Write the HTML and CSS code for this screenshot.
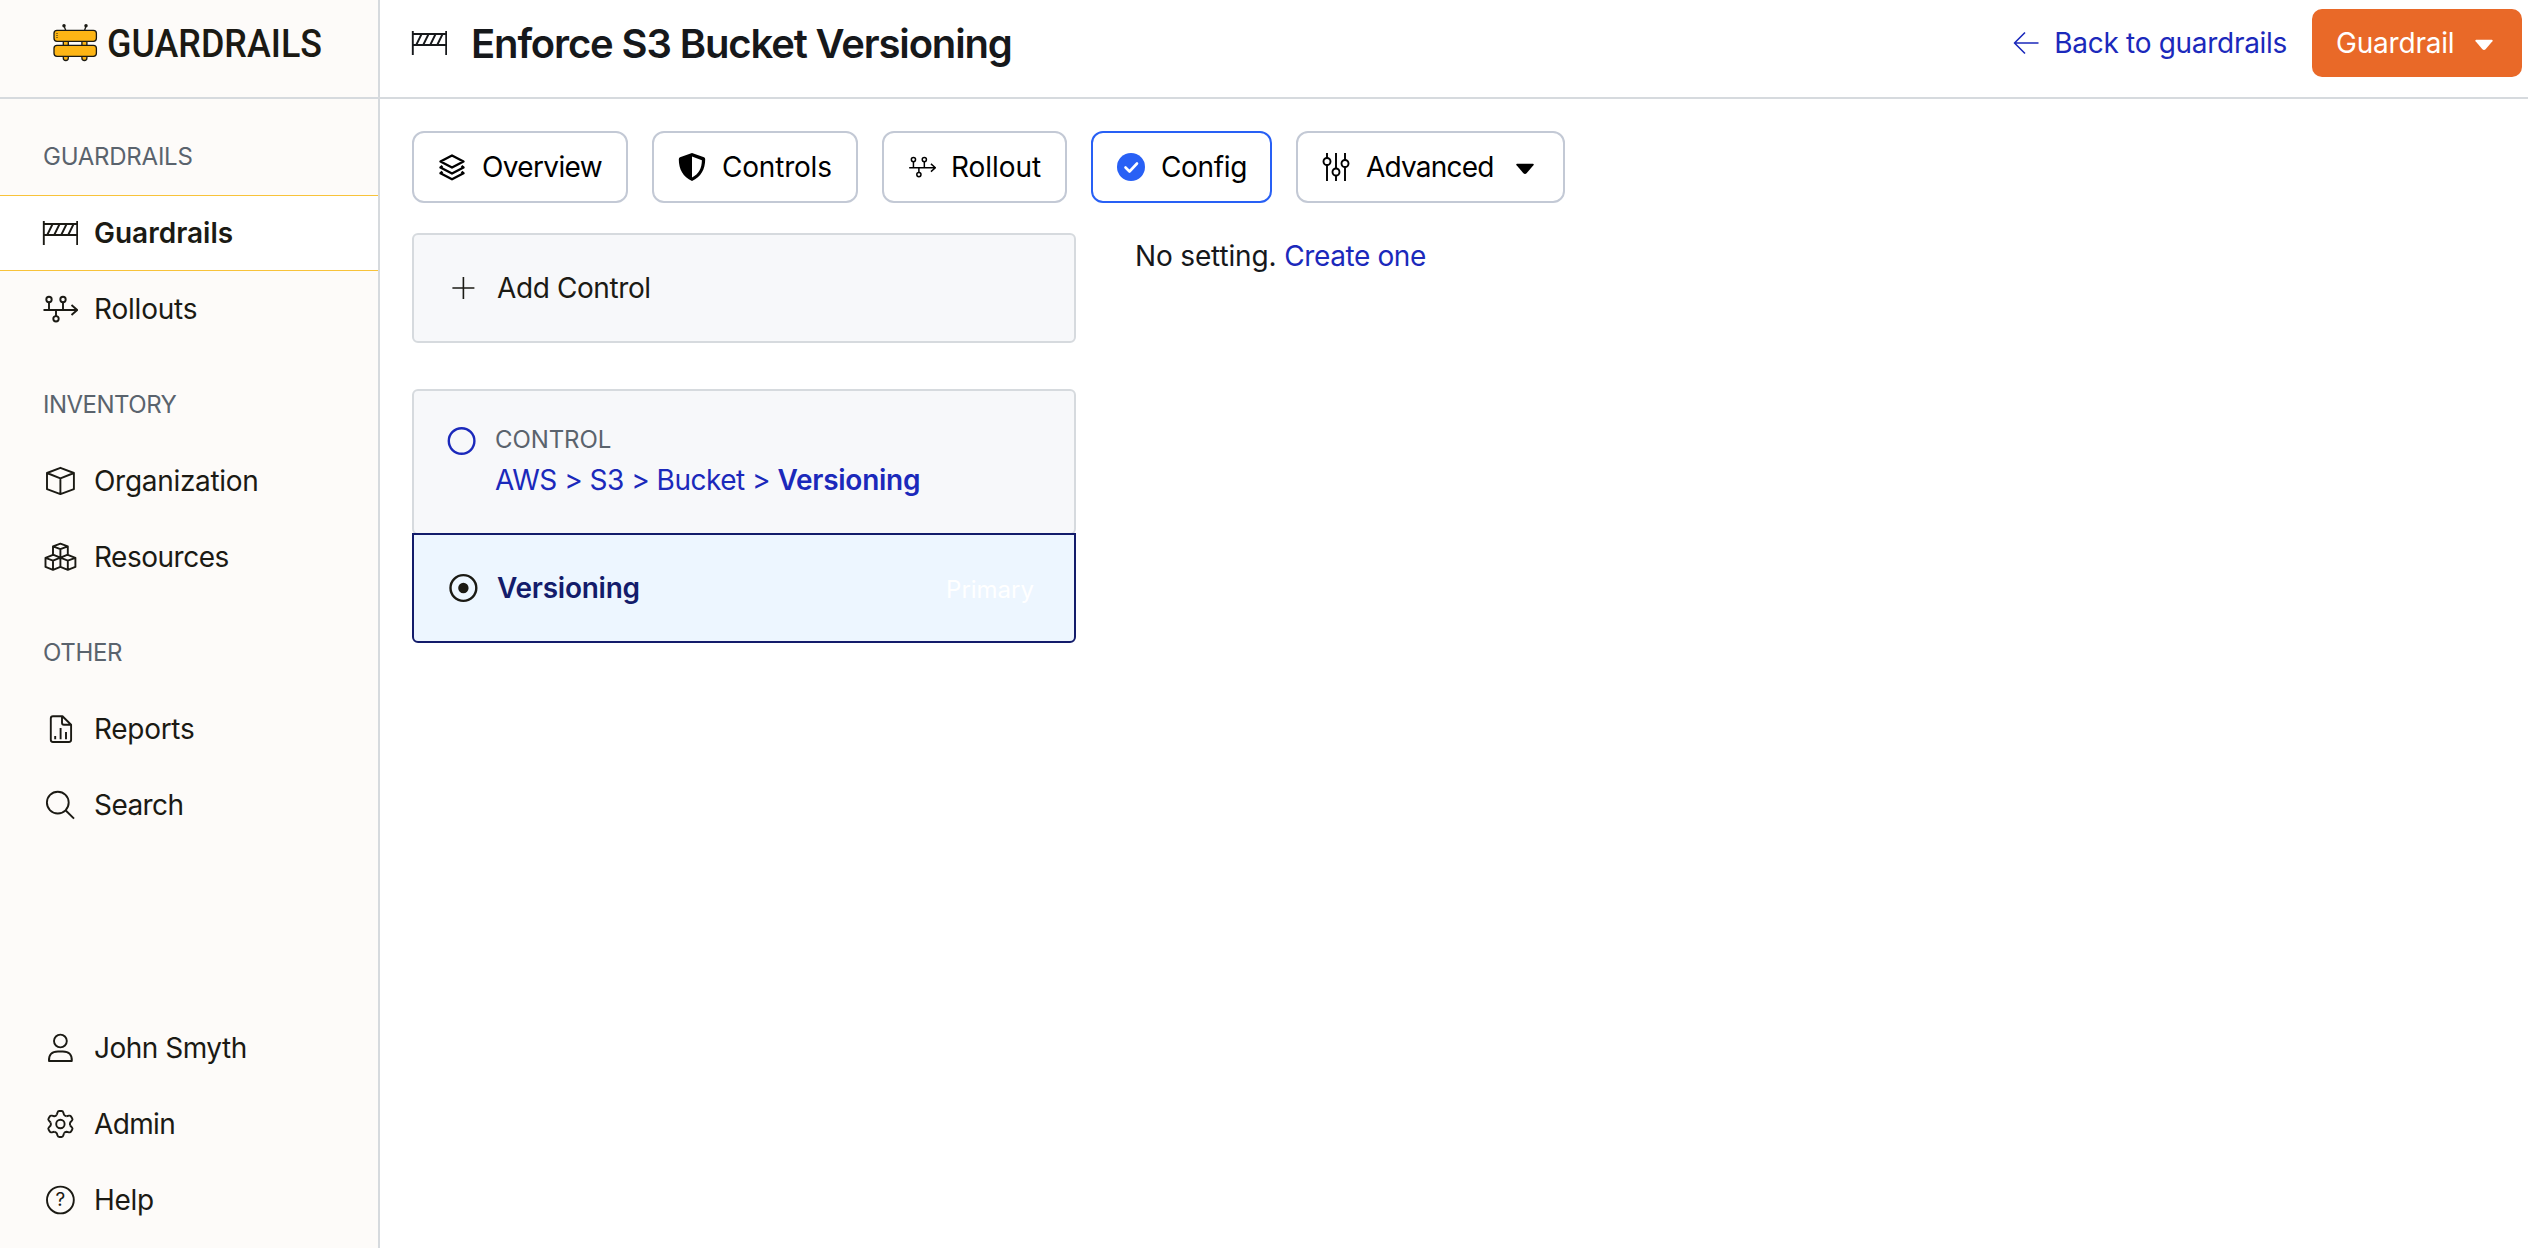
FILE: index.html
```html
<!DOCTYPE html>
<html lang="en">
<head>
<meta charset="utf-8">
<title>Enforce S3 Bucket Versioning</title>
<link rel="stylesheet" href="styles.css">
</head>
<body>
<svg class="defs" width="0" height="0">
  <symbol id="i-guardrail" viewBox="0 0 36 36"><path d="M1.8 6v24M35.2 6v24M1.8 9h33.4M1.8 20h33.4M5.2 20l5.4-11M12.2 20l5.4-11M19.2 20l5.4-11M26.2 20l5.4-11"/></symbol>
  <symbol id="i-rollout" viewBox="0 0 36 36"><path d="M1.5 19H35M29.5 14l5.7 5-5.7 5M7 11.5V19M21 11.5V19M14 19v6.2"/><circle cx="7" cy="8.5" r="2.7"/><circle cx="21" cy="8.5" r="2.7"/><circle cx="14" cy="27.8" r="2.7"/></symbol>
  <symbol id="i-caret" viewBox="0 0 20 12"><path d="M2.2.8h15.6q1.6 0 .6 1.5l-6.6 7.8q-1.8 1.8-3.6 0L1.6 2.3Q.6.8 2.2.8z"/></symbol>
</svg>
<div class="app">
  <aside class="sidebar">
    <div class="brand">
      <svg class="brand-logo" width="290" height="70" viewBox="50 10 290 70">
        <g class="logo-mark">
          <path d="M64 26l2 5M86 26l-1.6 5"/>
          <circle class="logo-dot" cx="64" cy="25.8" r="1.1"/><circle class="logo-dot" cx="86" cy="25.8" r="1.1"/>
          <path d="M63.3 38h5v20q0 2.500-2.500 2.500t-2.500-2.500zM81.900 38h5v20q0 2.500-2.500 2.500t-2.500-2.500z"/>
          <rect x="54" y="30.300" width="42.400" height="11" rx="3"/>
          <rect x="54" y="45.300" width="42.400" height="11" rx="3"/>
          <path class="logo-dots" d="M57 33v6"/>
        </g>
        <text class="logo-text" x="107" y="57.300" textLength="215" lengthAdjust="spacingAndGlyphs">GUARDRAILS</text>
      </svg>
    </div>
    <nav class="nav">
      <h2 class="nav-label tr-25">GUARDRAILS</h2>
      <a class="nav-item active"><svg class="icon"><use href="#i-guardrail"/></svg><span>Guardrails</span></a>
      <a class="nav-item"><svg class="icon"><use href="#i-rollout"/></svg><span class="tr-20">Rollouts</span></a>
      <h2 class="nav-label tr-50">INVENTORY</h2>
      <a class="nav-item"><svg class="icon" viewBox="0 0 36 36"><path d="M18.400 4.800L31.900 10v16.200l-13.500 4.900L5 26.200V10zM5 10l13.400 5.400L31.900 10M18.400 15.400v15.700"/></svg><span class="tr-30">Organization</span></a>
      <a class="nav-item"><svg class="icon" viewBox="0 0 36 36"><path d="M18.400 4.700l7.400 2.600v8.400l-7.400 3-7.400-3V7.300zM11 7.300l7.400 2.900 7.400-2.900M18.400 10.200v8.500M11 15.800l-7.500 3v9.100l7.500 2.900 7.400-2.900 7.400 2.900 7.600-2.900v-9.100l-7.600-3M3.500 18.800L11 21.700l7.400-3 7.400 3 7.600-2.900M11 21.700v9.100M25.800 21.700v9.100M18.400 18.700v9.200"/></svg><span class="tr-50">Resources</span></a>
      <h2 class="nav-label tr-35">OTHER</h2>
      <a class="nav-item"><svg class="icon" viewBox="0 0 36 36"><path d="M11 5.200h9.500l8.600 8.500v15.100q0 2.200-2.200 2.200H11q-2.200 0-2.200-2.200V7.400Q8.800 5.200 11 5.200zM20 5.200v6.600q0 1.900 1.900 1.900h7.200M13.200 25v3.200M18.600 17v11.200M24 21v7.200"/></svg><span class="tr-30">Reports</span></a>
      <a class="nav-item"><svg class="icon" viewBox="0 0 36 36"><circle cx="15.800" cy="15.600" r="10.900"/><path d="M23.500 23.300l8.500 8.300"/></svg><span class="tr-55">Search</span></a>
      <div class="nav-bottom">
        <a class="nav-item"><svg class="icon" viewBox="0 0 36 36"><circle cx="18.400" cy="11" r="6.400"/><path d="M7 31q-.5-9.500 9-9.500h4.800q9.500 0 9 9.500z"/></svg><span class="tr-50">John Smyth</span></a>
        <a class="nav-item"><svg class="icon" viewBox="0 0 36 36">
          <defs><path id="tooth" d="M-3.600-9.200L-2.900-11.600Q-2.500-13-1.200-13H1.200Q2.500-13 2.900-11.600L3.600-9.200Q4.500-8 6.170-7.720"/></defs>
          <g transform="translate(18.400 18)"><use href="#tooth"/><use href="#tooth" transform="rotate(60)"/><use href="#tooth" transform="rotate(120)"/><use href="#tooth" transform="rotate(180)"/><use href="#tooth" transform="rotate(240)"/><use href="#tooth" transform="rotate(300)"/><circle r="4.200"/></g></svg><span class="tr-65">Admin</span></a>
        <a class="nav-item"><svg class="icon" viewBox="0 0 36 36"><circle cx="18.400" cy="18" r="13.400"/><text class="help-mark" x="18.400" y="24.300">?</text></svg><span class="tr-30">Help</span></a>
      </div>
    </nav>
  </aside>
  <main class="main">
    <header class="topbar">
      <svg class="icon"><use href="#i-guardrail"/></svg>
      <h1 class="title">Enforce S3 Bucket Versioning</h1>
      <a class="back"><svg class="icon-arrow" width="26" height="24" viewBox="0 0 26 24"><path d="M1.500 12H25.500M12 1.500L1.500 12 12 22.500"/></svg><span class="tr-30">Back to guardrails</span></a>
      <button class="primary"><span class="tr-20">Guardrail</span><svg class="caret" width="20" height="12"><use href="#i-caret"/></svg></button>
    </header>
    <div class="tabs">
      <button class="tab tab-overview"><svg class="tab-icon layers" viewBox="0 0 28 28"><path d="M14 2.500l11.500 6L14 14.500 2.500 8.500zM4.500 13L2.500 14.500l11.500 6 11.500-6L23.500 13M4.500 18.800L2.500 20.300l11.500 6 11.500-6-2-1.500"/></svg><span class="tr-65">Overview</span></button>
      <button class="tab tab-controls"><svg class="tab-icon" viewBox="0 0 28 28"><path class="solid" d="M14 0l12 4.200q1.200.5 1.200 2C27.200 16 23 24 14 28 5 24 .800 16 .800 6.200q0-1.500 1.200-2zM14 3.600V24.400c7-3.400 9.800-9.500 9.900-17.200z" fill-rule="evenodd"/></svg><span class="tr-20">Controls</span></button>
      <button class="tab tab-rollout"><svg class="tab-icon"><use href="#i-rollout"/></svg><span class="tr-05">Rollout</span></button>
      <button class="tab tab-config"><svg class="tab-icon" viewBox="0 0 28 28"><circle class="dot-blue" cx="14" cy="14" r="14"/><path class="check" d="M8.500 14.500l4 4 7.500-8"/></svg><span class="tr-35">Config</span></button>
      <button class="tab tab-advanced"><svg class="tab-icon" viewBox="0 0 28 28"><path d="M5 0v5M5 12v16M14 0v15.500M14 22.500V28M23 0v7M23 14v14"/><circle cx="5" cy="8.500" r="3.500"/><circle cx="14" cy="19" r="3.500"/><circle cx="23" cy="10.500" r="3.500"/></svg><span class="tr-80">Advanced</span><svg class="caret" width="20" height="12"><use href="#i-caret"/></svg></button>
    </div>
    <div class="content">
      <section class="controls">
        <div class="card add"><svg class="mark" viewBox="0 0 32 32"><path d="M16.400 5v22M5.400 16h22"/></svg><span class="tr-40">Add Control</span></div>
        <div class="group">
          <div class="card control">
            <svg class="mark link" viewBox="0 0 32 32"><circle cx="15.600" cy="17" r="12.800"/></svg>
            <div class="control-text">
              <div class="eyebrow">CONTROL</div>
              <div class="crumb">AWS &gt; S3 &gt; Bucket &gt; <b>Versioning</b></div>
            </div>
          </div>
          <div class="card selected"><svg class="mark radio" viewBox="0 0 32 32"><circle cx="16.400" cy="16" r="12.900"/><circle class="radio-dot" cx="16.400" cy="16" r="5.200"/></svg><span class="selected-name">Versioning</span><span class="badge">Primary</span></div>
        </div>
      </section>
      <p class="empty"><span class="tr-15">No setting.</span> <a class="create tr-40">Create one</a></p>
    </div>
  </main>
</div>
</body>
</html>
```
FILE: styles.css
```css
* { box-sizing: border-box; }
body { margin: 0; font: 28px/36px Inter, "Liberation Sans", sans-serif; color: #16181b; background: #fff; }
h1, h2, p { margin: 0; font-weight: 400; }
svg { fill: none; stroke: currentColor; stroke-width: 1.9; stroke-linejoin: round; flex: none; display: block; }
.defs { position: absolute; }
.app { display: flex; height: 1248px; }

/* optical tracking */
.tr-05 { letter-spacing: -.05px; }
.tr-15 { letter-spacing: -.15px; }
.tr-20 { letter-spacing: -.2px; }
.tr-25 { letter-spacing: -.25px; }
.tr-30 { letter-spacing: -.3px; }
.tr-35 { letter-spacing: -.35px; }
.tr-40 { letter-spacing: -.4px; }
.tr-50 { letter-spacing: -.5px; }
.tr-55 { letter-spacing: -.57px; }
.tr-65 { letter-spacing: -.65px; }
.tr-80 { letter-spacing: -.8px; }

.sidebar { width: 380px; flex: none; background: #fdfbf9; border-right: 2px solid #d6dade; color: #1b1a14; display: flex; flex-direction: column; }
.brand { height: 99px; border-bottom: 2px solid #d6dade; padding: 10px 0 0 50px; flex: none; }
.logo-mark { fill: #fdb515; stroke: #1b1a14; stroke-width: 1.3; }
.logo-dot { fill: #1b1a14; }
.logo-dots { stroke-width: 1; stroke-dasharray: 1 1; }
.logo-text { font: 500 38.5px Roboto, sans-serif; fill: #1b1a14; stroke: none; }
.nav { flex: 1; display: flex; flex-direction: column; padding-bottom: 10px; }
.nav-label { height: 96px; padding: 39.5px 0 0 43px; font-size: 24px; color: #5a636d; flex: none; }
.nav-item { height: 76px; display: flex; align-items: center; gap: 16px; padding-left: 42px; flex: none; }
.nav-item.active { background: #fff; border: solid #f8c33a; border-width: 1px 0; font-weight: 600; }
.nav-bottom { margin-top: auto; }
.icon { width: 36px; height: 36px; }
.help-mark { font: 19px Inter, sans-serif; fill: currentColor; stroke: none; text-anchor: middle; }

.main { flex: 1; min-width: 0; }
.topbar { height: 99px; border-bottom: 2px solid #d6dade; padding: 0 6px 11px 31px; display: flex; align-items: center; }
.title { margin: 2px 0 0 24px; font-size: 40px; line-height: 48px; font-weight: 600; letter-spacing: -1.14px; white-space: nowrap; }
.back { margin-left: auto; display: flex; align-items: center; gap: 15px; color: #1b29bb; }
.icon-arrow { stroke-width: 1.6; }
.primary { width: 210px; height: 68px; margin-left: 25px; padding: 0 28px 0 24px; border: 0; border-radius: 10px; background: #e96928; color: #fff; font: inherit; display: flex; align-items: center; justify-content: space-between; }
.caret { fill: currentColor; stroke: none; position: relative; top: 2px; }

.tabs { display: flex; gap: 24px; padding: 32px 0 0 32px; }
.tab { height: 72px; padding: 0 0 0 24px; border: 2px solid #c3c9d5; border-radius: 12px; background: #fff; color: #000; font: inherit; display: flex; align-items: center; gap: 16px; }
.tab-overview { width: 216px; }
.tab-controls { width: 206px; }
.tab-rollout { width: 185px; gap: 15px; }
.tab-config { width: 181px; border-color: #2860f5; }
.tab-advanced { width: 269px; padding-right: 28px; }
.tab-advanced .caret { margin-left: auto; }
.tab-icon { width: 28px; height: 28px; }
.layers { stroke-width: 2.4; }
.solid { fill: #000; stroke: none; }
.dot-blue { fill: #2860f5; stroke: none; }
.check { stroke: #fff; stroke-width: 2.6; stroke-linecap: round; }

.content { display: flex; gap: 59px; padding: 30px 0 0 32px; }
.controls { width: 664px; display: flex; flex-direction: column; gap: 46px; }
.card { height: 110px; border: 2px solid #d6dade; border-radius: 6px; background: #f7f8fa; display: flex; align-items: center; padding-left: 33px; }
.mark { width: 32px; height: 32px; margin-right: 18px; }
.add { color: #1b1a14; }
.add .mark { stroke-width: 1.6; }
.control { height: 146px; align-items: flex-start; padding: 31px 0 0 32px; }
.control .mark { stroke-width: 2.4; margin: 2px 17px 0 0; }
.link, .crumb { color: #1b29bb; }
.eyebrow { font-size: 24px; letter-spacing: -.09px; color: #5a636d; margin-bottom: 4px; }
.crumb { letter-spacing: -.5px; white-space: nowrap; }
.crumb b { font-weight: 600; letter-spacing: -.25px; }
.selected { margin-top: -2px; border-color: #131c6b; border-radius: 0 0 6px 6px; background: #edf6ff; position: relative; }
.radio { color: #1b1a14; stroke-width: 2.4; }
.radio-dot { fill: currentColor; stroke: none; }
.selected-name { color: #131c6b; font-weight: 600; letter-spacing: -.25px; }
.badge { margin: 3px 40px 0 auto; color: #fff; font-size: 24px; }
.empty { padding-top: 5px; }
.create { color: #1b29bb; }
```
